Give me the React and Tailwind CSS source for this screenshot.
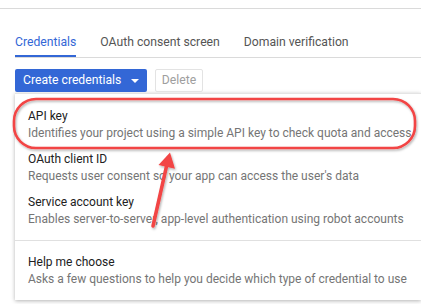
import React from "react";

const items = [
  {
    title: "API key",
    desc: "Identifies your project using a simple API key to check quota and access",
  },
  {
    title: "OAuth client ID",
    desc: "Requests user consent so your app can access the user's data",
  },
  {
    title: "Service account key",
    desc: "Enables server-to-server, app-level authentication using robot accounts",
  },
];

function MenuItem({ title, desc, className = "" }) {
  return (
    <div className={"pl-[13px] whitespace-nowrap " + className}>
      <div className="text-[12px] leading-[17px] text-[#212121]">{title}</div>
      <div className="text-[12px] leading-[17px] text-[#757575]">{desc}</div>
    </div>
  );
}

export default function App() {
  return (
    <div className="relative w-[421px] h-[304px] overflow-hidden bg-white font-['Roboto',sans-serif]">
      <div className="h-[9px] border-b border-[#dadada]"></div>

      <div className="ml-[15px] flex gap-[24px] border-b border-[#dadada] text-[12.2px] leading-[16px]">
        <div className="pt-[25px] pb-[5px] border-b-2 border-[#3367d6] text-[#3367d6]">
          Credentials
        </div>
        <div className="pt-[25px] pb-[7px] text-[#555]">OAuth consent screen</div>
        <div className="pt-[25px] pb-[7px] text-[#555]">Domain verification</div>
      </div>

      <div className="ml-[15px] mt-[11px] flex gap-[8px]">
        <div className="w-[132px] h-[23px] rounded-[2px] bg-[#3367d6] text-white text-[12.2px] flex items-center pl-[8px] gap-[10px] whitespace-nowrap">
          <span>Create credentials</span>
          <svg width="8" height="4" viewBox="0 0 8 4">
            <path d="M0 0 L8 0 L4 4 Z" fill="white" />
          </svg>
        </div>
        <div className="w-[48px] h-[23px] rounded-[2px] border border-[#e3e3e3] text-[#9e9e9e] text-[12.2px] flex items-center justify-center">
          Delete
        </div>
      </div>

      <div className="ml-[15px] mt-px border-t border-[#e4e4e4] bg-white shadow-[0_1px_4px_rgba(0,0,0,0.3)] pt-[14px] pb-[12px]">
        {items.map((it, i) => (
          <MenuItem key={it.title} {...it} className={i < 2 ? "pb-[9px]" : ""} />
        ))}
        <div className="mt-[12px] border-t border-[#e0e0e0] pt-[13px]">
          <MenuItem
            title="Help me choose"
            desc="Asks a few questions to help you decide which type of credential to use"
          />
        </div>
      </div>

      <svg
        className="absolute left-0 top-0 pointer-events-none"
        width="421"
        height="304"
        viewBox="0 0 421 304"
      >
        <defs>
          <filter id="sh" x="-10%" y="-10%" width="120%" height="130%">
            <feDropShadow dx="1" dy="1.5" stdDeviation="1.2" floodColor="#000" floodOpacity="0.3" />
          </filter>
        </defs>
        <g filter="url(#sh)">
          <rect x="14" y="99" width="401" height="49" rx="22" ry="22" fill="none" stroke="#f24444" strokeWidth="2.6" />
          <line x1="153" y1="226" x2="167" y2="164" stroke="#f24444" strokeWidth="3.5" strokeLinecap="round" />
          <path d="M170 152.5 L158.5 165 L175 168.8 Z" fill="#f24444" />
        </g>
      </svg>
    </div>
  );
}
